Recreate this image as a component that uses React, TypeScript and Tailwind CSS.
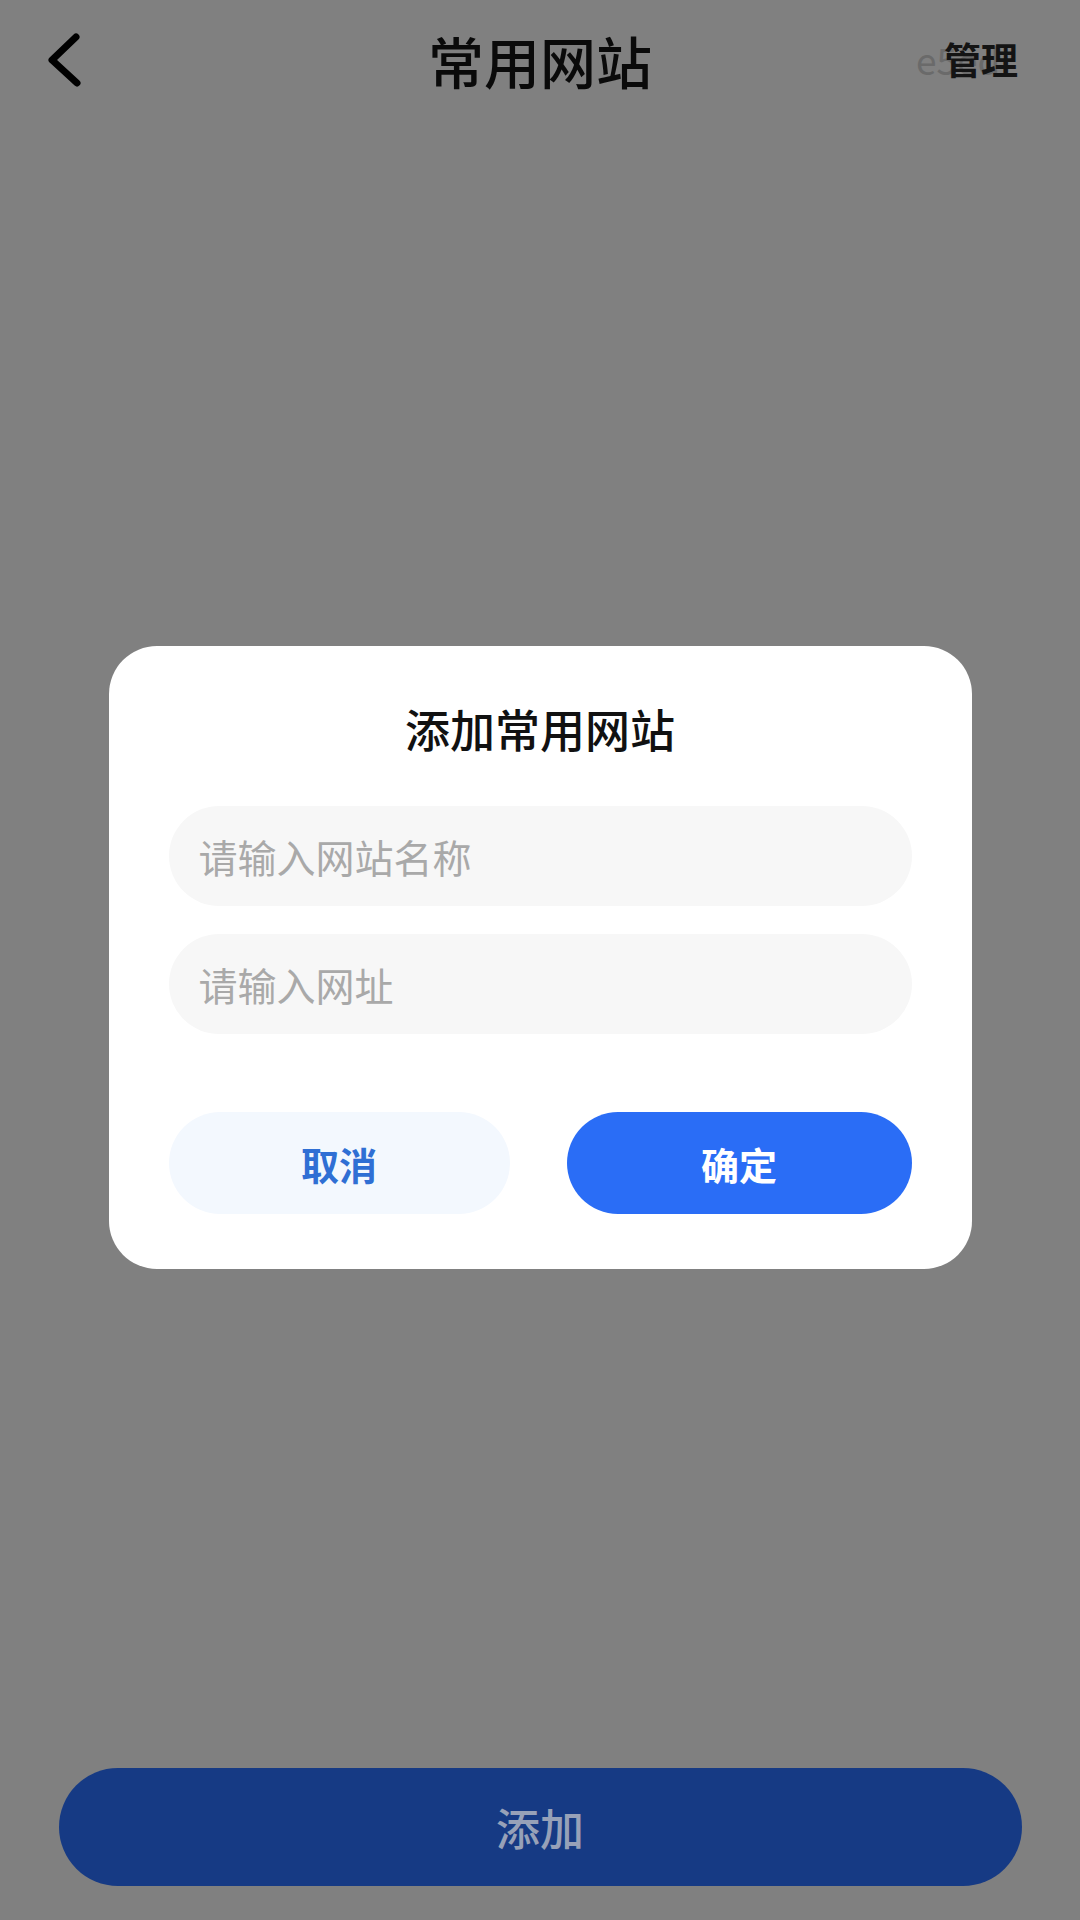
import React from "react";

const font = { fontFamily: '"Noto Sans CJK SC", "Noto Sans", sans-serif' };

export default function App() {
  return (
    <div
      className="relative flex h-[1920px] w-[1080px] flex-col overflow-hidden bg-[#808080]"
      style={font}
    >
      {/* Header */}
      <div className="relative flex h-[120px] items-center justify-between pl-[44px] pr-[62px]">
        <svg width="40" height="56" viewBox="0 0 40 56" className="mt-[-2px]">
          <path
            d="M32 6 L8 29 L33 52"
            fill="none"
            stroke="#000"
            strokeWidth="7"
            strokeLinecap="round"
            strokeLinejoin="round"
          />
        </svg>
        <div className="absolute left-1/2 top-[29px] -translate-x-1/2 text-[56px] font-medium leading-[62px] text-[#0a0a0a]">
          常用网站
        </div>
        <div className="relative mt-[-2px]">
          <span className="absolute left-[-28px] top-0 text-[37px] leading-[44px] text-[#6a6a6a]">
            e5ed
          </span>
          <span className="relative text-[37px] font-bold leading-[44px] text-[#141414]">管理</span>
        </div>
      </div>

      {/* Dialog */}
      <div className="flex flex-1 items-start justify-center pt-[526px]">
        <div className="flex w-[863px] flex-col rounded-[48px] bg-white px-[60px] pb-[55px] pt-[56px]">
          <div className="text-center text-[45px] font-medium leading-[54px] text-[#111]">
            添加常用网站
          </div>
          <div className="mt-[50px] flex h-[100px] items-center rounded-full bg-[#f7f7f7] pl-[30px] text-[39px] text-[#a9a9a9]">
            请输入网站名称
          </div>
          <div className="mt-[28px] flex h-[100px] items-center rounded-full bg-[#f7f7f7] pl-[30px] text-[39px] text-[#a9a9a9]">
            请输入网址
          </div>
          <div className="mt-[78px] flex justify-between">
            <div className="flex h-[102px] w-[341px] items-center justify-center rounded-full bg-[#f3f8fe] text-[38px] font-bold text-[#2f6fd4]">
              取消
            </div>
            <div className="flex h-[102px] w-[345px] items-center justify-center rounded-full bg-[#2a6df6] text-[38px] font-bold text-white">
              确定
            </div>
          </div>
        </div>
      </div>

      {/* Bottom button */}
      <div className="mb-[34px] flex justify-center">
        <div className="flex h-[118px] w-[963px] items-center justify-center rounded-full bg-[#163a84] text-[44px] font-medium text-[#97a1b8]">
          添加
        </div>
      </div>
    </div>
  );
}
